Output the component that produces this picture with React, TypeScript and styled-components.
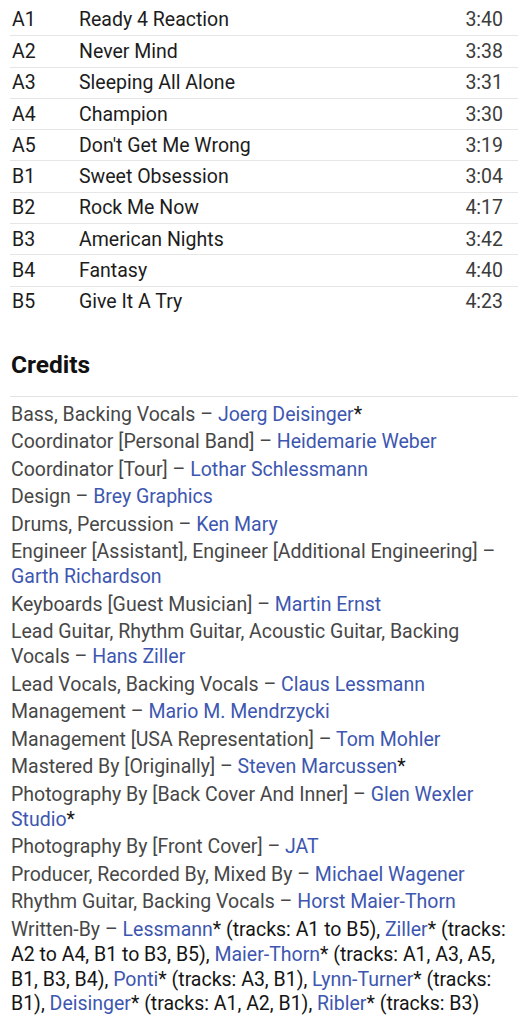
import React from 'react';
import styled, { createGlobalStyle } from 'styled-components';

interface ITrack {
    pos: string
    title: string
    duration: string
}

type Segment = { text: string, kind?: 'link' | 'plain' };

interface ICredit {
    role: string
    names: Segment[]
}

const tracks: ITrack[] = [
    { pos: 'A1', title: 'Ready 4 Reaction', duration: '3:40' },
    { pos: 'A2', title: 'Never Mind', duration: '3:38' },
    { pos: 'A3', title: 'Sleeping All Alone', duration: '3:31' },
    { pos: 'A4', title: 'Champion', duration: '3:30' },
    { pos: 'A5', title: "Don't Get Me Wrong", duration: '3:19' },
    { pos: 'B1', title: 'Sweet Obsession', duration: '3:04' },
    { pos: 'B2', title: 'Rock Me Now', duration: '4:17' },
    { pos: 'B3', title: 'American Nights', duration: '3:42' },
    { pos: 'B4', title: 'Fantasy', duration: '4:40' },
    { pos: 'B5', title: 'Give It A Try', duration: '4:23' },
];

const link = (text: string): Segment => ({ text, kind: 'link' });
const plain = (text: string): Segment => ({ text, kind: 'plain' });

const credits: ICredit[] = [
    { role: 'Bass, Backing Vocals', names: [link('Joerg Deisinger'), plain('*')] },
    { role: 'Coordinator [Personal Band]', names: [link('Heidemarie Weber')] },
    { role: 'Coordinator [Tour]', names: [link('Lothar Schlessmann')] },
    { role: 'Design', names: [link('Brey Graphics')] },
    { role: 'Drums, Percussion', names: [link('Ken Mary')] },
    { role: 'Engineer [Assistant], Engineer [Additional Engineering]', names: [link('Garth Richardson')] },
    { role: 'Keyboards [Guest Musician]', names: [link('Martin Ernst')] },
    { role: 'Lead Guitar, Rhythm Guitar, Acoustic Guitar, Backing Vocals', names: [link('Hans Ziller')] },
    { role: 'Lead Vocals, Backing Vocals', names: [link('Claus Lessmann')] },
    { role: 'Management', names: [link('Mario M. Mendrzycki')] },
    { role: 'Management [USA Representation]', names: [link('Tom Mohler')] },
    { role: 'Mastered By [Originally]', names: [link('Steven Marcussen'), plain('*')] },
    { role: 'Photography By [Back Cover And Inner]', names: [link('Glen Wexler Studio'), plain('*')] },
    { role: 'Photography By [Front Cover]', names: [link('JAT')] },
    { role: 'Producer, Recorded By, Mixed By', names: [link('Michael Wagener')] },
    { role: 'Rhythm Guitar, Backing Vocals', names: [link('Horst Maier-Thorn')] },
    {
        role: 'Written-By',
        names: [
            link('Lessmann'), plain('* (tracks: A1 to B5), '),
            link('Ziller'), plain('* (tracks: A2 to A4, B1 to B3, B5), '),
            link('Maier-Thorn'), plain('* (tracks: A1, A3, A5, B1, B3, B4), '),
            link('Ponti'), plain('* (tracks: A3, B1), '),
            link('Lynn-Turner'), plain('* (tracks: B1), '),
            link('Deisinger'), plain('* (tracks: A1, A2, B1), '),
            link('Ribler'), plain('* (tracks: B3)'),
        ]
    },
];

const GlobalStyle = createGlobalStyle`
    body {
        margin: 0;
        background: #ffffff;
        font-family: Roboto, "Liberation Sans", sans-serif;
    }
`;

const Page = styled.div`
    width: 528px;
    padding: 4px 10px 0 10px;
    box-sizing: border-box;
`;

const TrackList = styled.div`
    display: flex;
    flex-direction: column;
`;

const TrackRow = styled.div`
    display: grid;
    grid-template-columns: 67px 1fr auto;
    align-items: center;
    height: 31.3px;
    padding: 0 15px 0 2px;
    font-size: 19.5px;
    color: #1c1c1c;
    border-top: 1px solid #e6e6e6;
    box-sizing: border-box;
    &:first-child {
        border-top: none;
    }
`;

const Duration = styled.span`
    color: #3c3c3c;
    text-align: right;
`;

const Heading = styled.h2`
    margin: 33px 0 0 0;
    padding: 0 1px 16px 1px;
    font-size: 24.5px;
    font-weight: 700;
    color: #111;
    border-bottom: 1px solid #e3e3e3;
    line-height: 30px;
`;

const CreditList = styled.div`
    padding: 6px 8px 0 1px;
    display: flex;
    flex-direction: column;
    gap: 2.6px;
`;

const CreditLine = styled.div`
    font-size: 19.5px;
    line-height: 24.9px;
    color: #474747;
`;

const Name = styled.span<{ $kind?: 'link' | 'plain' }>`
    color: ${p => p.$kind === 'link' ? '#3d57b0' : '#151515'};
`;

const App = () => {
    return (
        <Page>
            <GlobalStyle />
            <TrackList>
                {tracks.map((track: ITrack) => (
                    <TrackRow key={track.pos}>
                        <span>{track.pos}</span>
                        <span>{track.title}</span>
                        <Duration>{track.duration}</Duration>
                    </TrackRow>
                ))}
            </TrackList>
            <Heading>Credits</Heading>
            <CreditList>
                {credits.map((credit: ICredit, index: number) => (
                    <CreditLine key={index}>
                        {credit.role} –{' '}
                        {credit.names.map((seg: Segment, i: number) => (
                            <Name key={i} $kind={seg.kind}>{seg.text}</Name>
                        ))}
                    </CreditLine>
                ))}
            </CreditList>
        </Page>
    )
};

export default App;
